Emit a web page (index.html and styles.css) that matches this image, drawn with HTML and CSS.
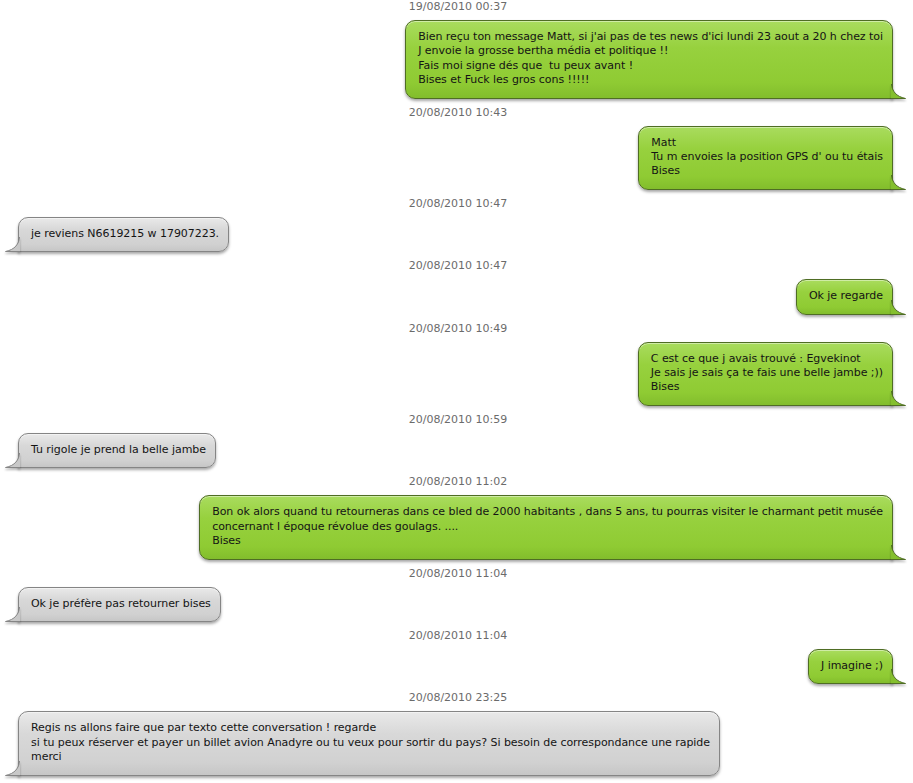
FILE: index.html
```html
<!DOCTYPE html>
<html lang="fr">
<head>
<meta charset="utf-8">
<title>Conversation</title>
<link rel="stylesheet" href="styles.css">
</head>
<body>
<div class="thread">
  <div class="msg out">
    <div class="time">19/08/2010 00:37</div>
    <div class="bubble">Bien reçu ton message Matt, si j'ai pas de tes news d'ici lundi 23 aout a 20 h chez toi<br>J envoie la grosse bertha média et politique !!<br>Fais moi signe dés que&nbsp; tu peux avant !<br>Bises et Fuck les gros cons !!!!!<svg class="tail" viewBox="0 0 15 15" width="15" height="15"><path class="tf" d="M0,0 H0.5 C1,7 5,12.5 14.5,14.5 H0 Z"/><path class="ts" d="M0.5,0 C1,7 5,12.5 14.5,14.5 H0"/></svg></div>
  </div>
  <div class="msg out">
    <div class="time">20/08/2010 10:43</div>
    <div class="bubble">Matt<br>Tu m envoies la position GPS d' ou tu étais<br>Bises<svg class="tail" viewBox="0 0 15 15" width="15" height="15"><path class="tf" d="M0,0 H0.5 C1,7 5,12.5 14.5,14.5 H0 Z"/><path class="ts" d="M0.5,0 C1,7 5,12.5 14.5,14.5 H0"/></svg></div>
  </div>
  <div class="msg in">
    <div class="time">20/08/2010 10:47</div>
    <div class="bubble">je reviens N6619215 w 17907223.<svg class="tail" viewBox="0 0 15 15" width="15" height="15"><path class="tf" d="M0,0 H0.5 C1,7 5,12.5 14.5,14.5 H0 Z"/><path class="ts" d="M0.5,0 C1,7 5,12.5 14.5,14.5 H0"/></svg></div>
  </div>
  <div class="msg out">
    <div class="time">20/08/2010 10:47</div>
    <div class="bubble">Ok je regarde<svg class="tail" viewBox="0 0 15 15" width="15" height="15"><path class="tf" d="M0,0 H0.5 C1,7 5,12.5 14.5,14.5 H0 Z"/><path class="ts" d="M0.5,0 C1,7 5,12.5 14.5,14.5 H0"/></svg></div>
  </div>
  <div class="msg out">
    <div class="time">20/08/2010 10:49</div>
    <div class="bubble">C est ce que j avais trouvé : Egvekinot<br>Je sais je sais ça te fais une belle jambe ;))<br>Bises<svg class="tail" viewBox="0 0 15 15" width="15" height="15"><path class="tf" d="M0,0 H0.5 C1,7 5,12.5 14.5,14.5 H0 Z"/><path class="ts" d="M0.5,0 C1,7 5,12.5 14.5,14.5 H0"/></svg></div>
  </div>
  <div class="msg in">
    <div class="time">20/08/2010 10:59</div>
    <div class="bubble">Tu rigole je prend la belle jambe<svg class="tail" viewBox="0 0 15 15" width="15" height="15"><path class="tf" d="M0,0 H0.5 C1,7 5,12.5 14.5,14.5 H0 Z"/><path class="ts" d="M0.5,0 C1,7 5,12.5 14.5,14.5 H0"/></svg></div>
  </div>
  <div class="msg out">
    <div class="time">20/08/2010 11:02</div>
    <div class="bubble">Bon ok alors quand tu retourneras dans ce bled de 2000 habitants , dans 5 ans, tu pourras visiter le charmant petit musée<br>concernant l époque révolue des goulags. ....<br>Bises<svg class="tail" viewBox="0 0 15 15" width="15" height="15"><path class="tf" d="M0,0 H0.5 C1,7 5,12.5 14.5,14.5 H0 Z"/><path class="ts" d="M0.5,0 C1,7 5,12.5 14.5,14.5 H0"/></svg></div>
  </div>
  <div class="msg in">
    <div class="time">20/08/2010 11:04</div>
    <div class="bubble">Ok je préfère pas retourner bises<svg class="tail" viewBox="0 0 15 15" width="15" height="15"><path class="tf" d="M0,0 H0.5 C1,7 5,12.5 14.5,14.5 H0 Z"/><path class="ts" d="M0.5,0 C1,7 5,12.5 14.5,14.5 H0"/></svg></div>
  </div>
  <div class="msg out">
    <div class="time">20/08/2010 11:04</div>
    <div class="bubble">J imagine ;)<svg class="tail" viewBox="0 0 15 15" width="15" height="15"><path class="tf" d="M0,0 H0.5 C1,7 5,12.5 14.5,14.5 H0 Z"/><path class="ts" d="M0.5,0 C1,7 5,12.5 14.5,14.5 H0"/></svg></div>
  </div>
  <div class="msg in">
    <div class="time">20/08/2010 23:25</div>
    <div class="bubble">Regis ns allons faire que par texto cette conversation ! regarde<br>si tu peux réserver et payer un billet avion Anadyre ou tu veux pour sortir du pays? Si besoin de correspondance une rapide<br>merci<svg class="tail" viewBox="0 0 15 15" width="15" height="15"><path class="tf" d="M0,0 H0.5 C1,7 5,12.5 14.5,14.5 H0 Z"/><path class="ts" d="M0.5,0 C1,7 5,12.5 14.5,14.5 H0"/></svg></div>
  </div>
</div>
</body>
</html>
```
FILE: styles.css
```css
html, body {
  margin: 0;
  padding: 0;
  background: #ffffff;
  overflow: hidden;
}

body {
  font-family: "DejaVu Sans", "Liberation Sans", sans-serif;
  font-size: 11px;
  color: #141414;
}

.thread {
  display: flex;
  flex-direction: column;
  padding: 0 20px 0 18px;
}

.msg {
  display: flex;
  flex-direction: column;
  margin-bottom: 7px;
}

.msg.out { align-items: flex-end; }
.msg.in { align-items: flex-start; }

.time {
  align-self: stretch;
  text-align: center;
  padding-left: 5px;
  line-height: 14px;
  height: 14px;
  margin-bottom: 6px;
  color: #6b6b6b;
}

.bubble {
  position: relative;
  white-space: nowrap;
  letter-spacing: -0.05px;
  line-height: 14.4px;
  padding: 9px 9px 10px 12px;
  border: 1px solid #55742a;
  border-radius: 10px;
  box-shadow: 0 2px 3px rgba(0, 0, 0, 0.35), inset 0 1px 0 rgba(255, 255, 255, 0.45);
}

.out .bubble {
  border-bottom-right-radius: 0;
  border-color: #4f6d24;
  background: linear-gradient(#a9dc5e 0, #97d13e 35%, #8fcb33 80%, #82bd2c 100%);
}

.in .bubble {
  border-bottom-left-radius: 0;
  border-color: #858585;
  background: linear-gradient(#e9e9e9 0, #d8d8d8 35%, #d1d1d1 80%, #c6c6c6 100%);
}

.tail {
  position: absolute;
  bottom: -1px;
  overflow: visible;
  filter: drop-shadow(0 2px 1px rgba(0, 0, 0, 0.28));
}

.out .tail { right: -14px; }
.in .tail { left: -14px; transform: scaleX(-1); }

.tail .ts {
  fill: none;
  stroke-width: 1;
}

.out .tail .tf { fill: #84bf2d; }
.out .tail .ts { stroke: #4f6d24; }
.in .tail .tf { fill: #c8c8c8; }
.in .tail .ts { stroke: #858585; }
```
